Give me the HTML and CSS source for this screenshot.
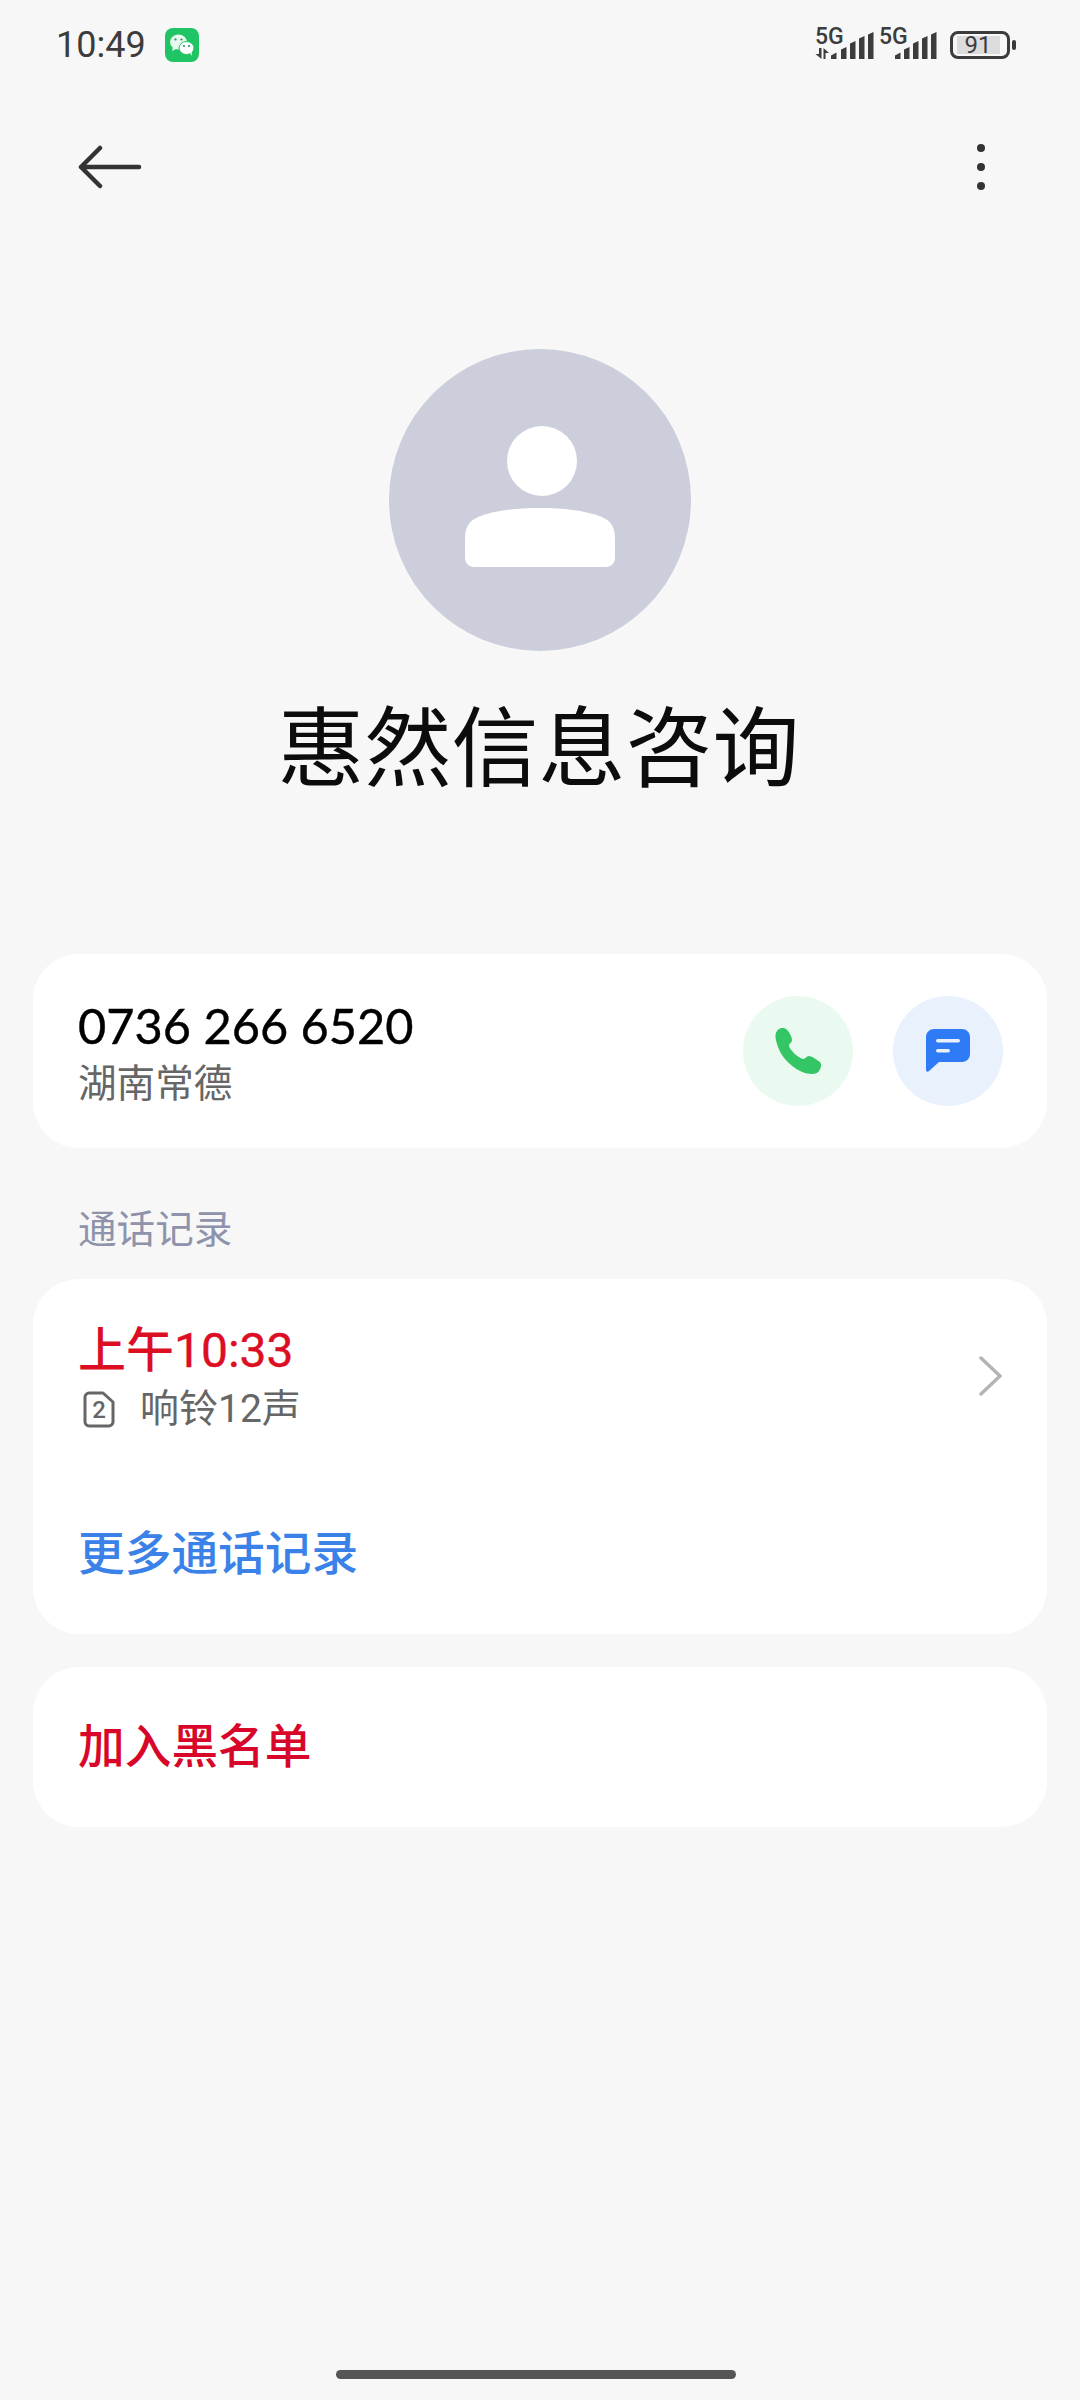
FILE: index.html
```html
<!DOCTYPE html>
<html lang="zh-CN">

<head>
    <meta charset="UTF-8">
    <meta name="viewport" content="width=device-width, initial-scale=1.0">
    <title>惠然信息咨询</title>
    <link rel="stylesheet" href="styles.css">
</head>

<body>
    <div class="status-bar">
        <div class="status-left">
            <span class="time">10:49</span>
            <svg class="wechat" width="34" height="34" viewBox="0 0 34 34">
                <rect width="34" height="34" rx="8" fill="#1fc464" />
                <ellipse cx="13.500" cy="14" rx="8.500" ry="7.500" fill="#e8f9ef" />
                <path d="M8 19l-1 4 5-2.500z" fill="#e8f9ef" />
                <ellipse cx="21.500" cy="20" rx="7.500" ry="6.500" fill="#fff" stroke="#1fc464" stroke-width="1" />
                <path d="M25 25l2 3-.5-4.500z" fill="#fff" />
                <circle cx="10.500" cy="11.500" r="1.100" fill="#1c8f4e" />
                <circle cx="16.500" cy="11.500" r="1.100" fill="#1c8f4e" />
                <circle cx="19" cy="18" r="1" fill="#1c8f4e" />
                <circle cx="24" cy="18" r="1" fill="#1c8f4e" />
            </svg>
        </div>
        <div class="status-right">
            <svg class="signal" width="58" height="34" viewBox="0 0 58 34" fill="#3c3c3c">
                <text class="net" x="-1" y="16">5G</text>
                <path d="M5.500 20v11l-6-5h3.500v-6zM7.500 31V20l5.500 5H9.500v6z" />
                <path d="M15 31v-3.500l5.500-3V31zM25 31V21.500l5.500-2.500V31zM34 31V15.500l5.500-2.500V31zM43 31V10.500L48.500 8V31zM52 31V6.500L57.500 4V31z" />
            </svg>
            <svg class="signal" width="58" height="34" viewBox="0 0 58 34" fill="#3c3c3c">
                <text class="net" x="0" y="16">5G</text>
                <path d="M16 31v-3.500l5.500-3V31zM25 31V21.500l5.500-2.500V31zM34 31V15.500l5.500-2.500V31zM43 31V10.500L48.500 8V31zM52 31V6.500L57.500 4V31z" />
            </svg>
            <div class="battery">
                <div class="battery-body">
                    <div class="battery-fill"></div>
                    <span class="battery-num">91</span>
                </div>
                <div class="battery-cap"></div>
            </div>
        </div>
    </div>

    <div class="toolbar">
        <svg width="64" height="44" viewBox="0 0 64 44" fill="none" stroke="#333" stroke-width="4.500" stroke-linecap="round" stroke-linejoin="round">
            <path d="M61 22H3M22 3L3 22l19 19" />
        </svg>
        <div class="more">
            <span class="dot"></span>
            <span class="dot"></span>
            <span class="dot"></span>
        </div>
    </div>

    <div class="profile">
        <div class="avatar">
            <svg class="avatar-icon" width="150" height="141" viewBox="0 0 150 141" fill="#fff">
                <circle cx="77" cy="35" r="35" />
                <path d="M0 112c0-10 4-17 13-21 19-7 39-9 62-9s43 2 62 9c9 4 13 11 13 21v20c0 5-4 9-9 9H9c-5 0-9-4-9-9z" />
            </svg>
        </div>
        <h1 class="name">惠然信息咨询</h1>
    </div>

    <div class="card number-card">
        <div class="number-info">
            <div class="number">0736 266 6520</div>
            <div class="location">湖南常德</div>
        </div>
        <div class="actions">
            <div class="action action-call">
                <svg width="46" height="46" viewBox="0 0 46 46" fill="#34c565">
                    <path d="M2 3c2-3 6-4 9-2 3 2 6 8 6 11 0 3-3 3-3 6 1 4 9 12 14 13 3 0 3-3 6-3 3 0 8 4 11 6 2 3 1 6-1 9-1 2-4 3-7 3C24 46 8 33 3 19 1 13-1 7 2 3z" />
                </svg>
            </div>
            <div class="action action-msg">
                <svg width="44" height="44" viewBox="0 0 44 44">
                    <path d="M8 0h28c4 0 8 3 8 8v17c0 5-4 8-8 8H13L3 42c-1 1-3 1-3-1V8c0-5 4-8 8-8z" fill="#2f7bf6" />
                    <rect x="10" y="10" width="24" height="3.500" rx="1.700" fill="#eaf1fd" />
                    <rect x="10" y="20" width="14" height="3.500" rx="1.700" fill="#eaf1fd" />
                </svg>
            </div>
        </div>
    </div>

    <div class="section-label">通话记录</div>

    <div class="card log-card">
        <div class="log-row">
            <div>
                <div class="log-time">上午<span class="log-clock">10:33</span></div>
                <div class="log-detail">
                    <svg class="sim" width="32" height="37" viewBox="0 0 32 37" fill="none" stroke="#666" stroke-width="3">
                        <path d="M6 2h14l10 9v20c0 2-2 4-4 4H6c-2 0-4-2-4-4V6c0-2 2-4 4-4z" stroke-linejoin="round" />
                        <text class="sim-num" x="16" y="27" text-anchor="middle">2</text>
                    </svg>
                    <span>响铃12声</span>
                </div>
            </div>
            <svg width="24" height="40" viewBox="0 0 24 40" fill="none" stroke="#b4b4b4" stroke-width="3.500" stroke-linecap="round" stroke-linejoin="round">
                <path d="M3 2l19 18L3 38" />
            </svg>
        </div>
        <div class="more-logs">更多通话记录</div>
    </div>

    <div class="card block-card">加入黑名单</div>

    <div class="home-bar"></div>
</body>

</html>
```

FILE: styles.css
```css
* {
    box-sizing: border-box;
}

html,
body {
    margin: 0;
    padding: 0;
}

body {
    position: relative;
    width: 1080px;
    height: 2400px;
    overflow: hidden;
    background-color: #f7f7f7;
    font-family: Roboto, "Noto Sans CJK SC", sans-serif;
    color: #111;
}

.status-bar {
    display: flex;
    justify-content: space-between;
    align-items: center;
    height: 90px;
    padding: 0 64px 0 56px;
}

.status-left {
    display: flex;
    align-items: center;
    gap: 19px;
}

.time {
    font-size: 36px;
    color: #3c3c3c;
}

.status-right {
    display: flex;
    align-items: center;
    gap: 5px;
}

.signal {
    overflow: visible;
}

.net {
    font-family: Roboto, sans-serif;
    font-size: 23px;
    font-weight: 500;
}

.battery {
    display: flex;
    align-items: center;
    gap: 2px;
    margin-left: 8px;
}

.battery-body {
    position: relative;
    display: flex;
    align-items: center;
    width: 60px;
    height: 28px;
    padding: 2px 7px 2px 4px;
    border: 3px solid #3c3c3c;
    border-radius: 8px;
}

.battery-fill {
    width: 100%;
    height: 100%;
    background-color: #dcdcdc;
}

.battery-num {
    position: absolute;
    left: 0;
    right: 4px;
    text-align: center;
    font-size: 24px;
    color: #3c3c3c;
}

.battery-cap {
    width: 4px;
    height: 10px;
    border-radius: 2px;
    background-color: #3c3c3c;
}

.toolbar {
    display: flex;
    justify-content: space-between;
    align-items: center;
    height: 94px;
    margin-top: 30px;
    padding: 0 95px 0 78px;
}

.more {
    display: flex;
    flex-direction: column;
    gap: 11px;
}

.dot {
    width: 8px;
    height: 8px;
    border-radius: 50%;
    background-color: #333;
}

.profile {
    display: flex;
    flex-direction: column;
    align-items: center;
    margin-top: 135px;
}

.avatar {
    display: flex;
    justify-content: center;
    align-items: center;
    width: 302px;
    height: 302px;
    border-radius: 50%;
    background-color: #cccfdb;
}

.avatar-icon {
    margin-bottom: 7px;
}

.name {
    margin: 40px 0 0;
    padding-right: 3px;
    font-size: 87px;
    font-weight: 400;
    line-height: 118px;
    color: #0c0c0c;
}

.card {
    margin: 0 33px;
    border-radius: 46px;
    background-color: #fff;
}

.number-card {
    display: flex;
    justify-content: space-between;
    align-items: center;
    height: 194px;
    margin-top: 145px;
    padding: 0 44px 0 45px;
}

.number-info {
    padding-top: 5px;
}

.number {
    font-family: Lato, sans-serif;
    font-size: 48.700px;
    line-height: 58px;
    color: #000;
    -webkit-text-stroke: 0.4px #000;
}

.location {
    margin-top: 3px;
    font-size: 38.600px;
    line-height: 54px;
    color: #666;
}

.actions {
    display: flex;
    gap: 40px;
}

.action {
    display: flex;
    justify-content: center;
    align-items: center;
    width: 110px;
    height: 110px;
    border-radius: 50%;
}

.action-call {
    background-color: #ebfaf0;
}

.action-msg {
    background-color: #e9f1fd;
}

.section-label {
    margin-top: 56px;
    padding-left: 78px;
    font-size: 38.600px;
    line-height: 52px;
    color: #8e93ab;
}

.log-card {
    height: 355px;
    margin-top: 23px;
    padding: 39px 45px 0;
}

.log-row {
    display: flex;
    justify-content: space-between;
    align-items: center;
}

.log-time {
    font-size: 48px;
    font-weight: 500;
    line-height: 66px;
    color: #dc0e24;
}

.log-clock {
    font-weight: 400;
    -webkit-text-stroke: 0.4px #dc0e24;
}

.log-detail {
    display: flex;
    align-items: center;
    gap: 25px;
    padding-left: 5px;
    font-size: 39px;
    line-height: 50px;
    color: #666;
}

.sim-num {
    font-family: Roboto, sans-serif;
    font-size: 24px;
    font-weight: 500;
    fill: #666;
    stroke: none;
}

.more-logs {
    margin-top: 90px;
    font-size: 46.700px;
    font-weight: 500;
    line-height: 60px;
    color: #3a82e8;
}

.block-card {
    height: 160px;
    margin-top: 33px;
    padding-left: 45px;
    font-size: 46.700px;
    font-weight: 500;
    line-height: 160px;
    color: #d8072a;
}

.home-bar {
    position: absolute;
    left: 336px;
    bottom: 21px;
    width: 400px;
    height: 9px;
    border-radius: 5px;
    background-color: #555;
}
```
